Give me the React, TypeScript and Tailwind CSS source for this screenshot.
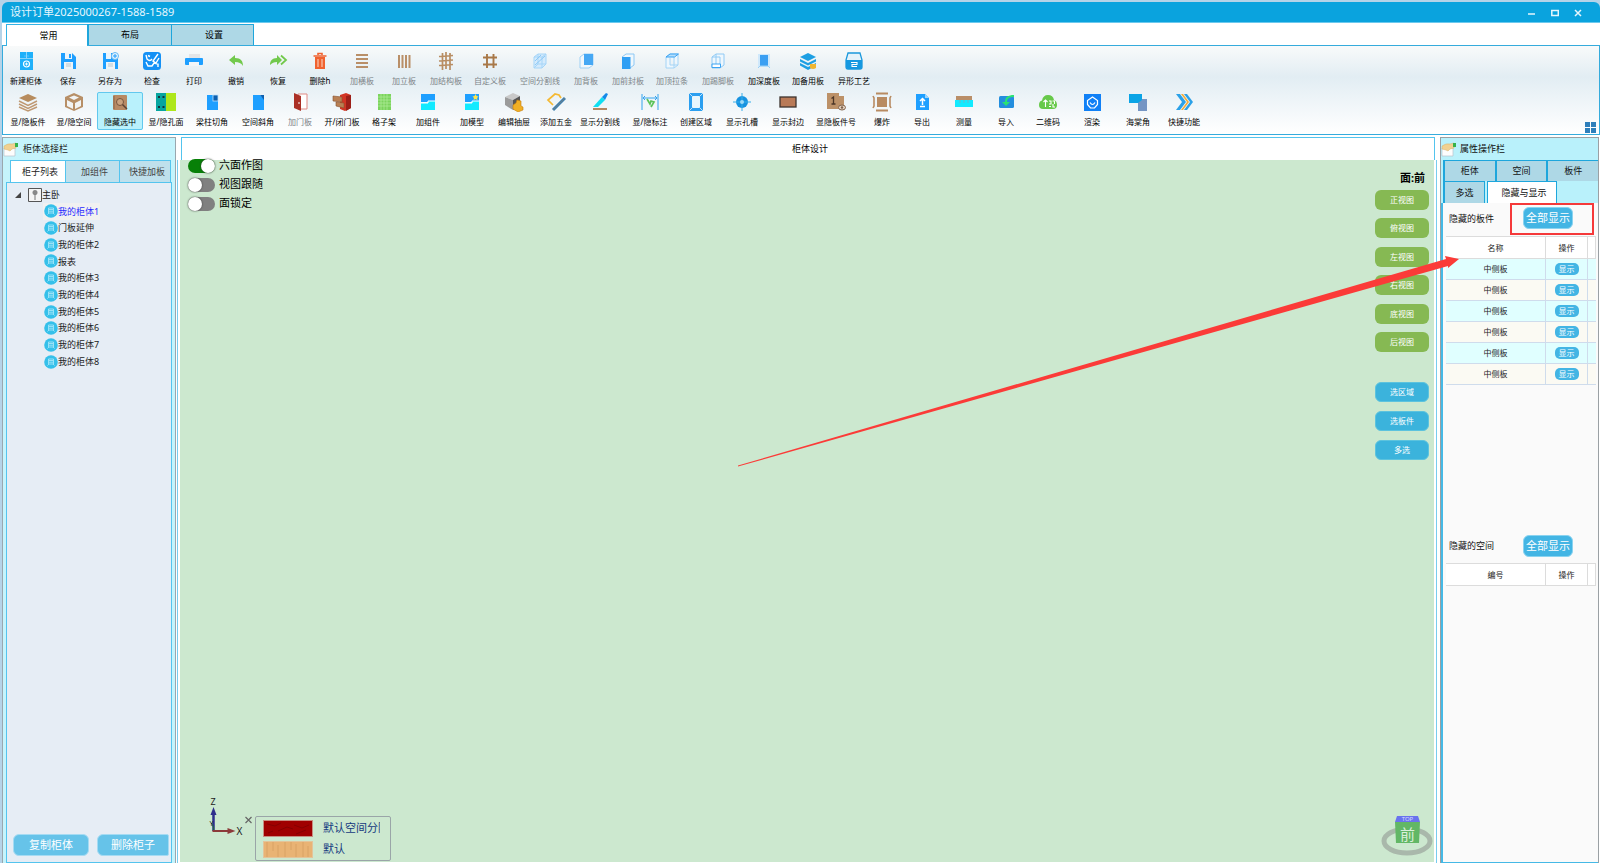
import type { ReactNode } from 'react';

const B = '#1e9fff';
const W = '#b98f68';

const icons: Record<string, ReactNode> = {
  newCabinet: (
    <>
      <rect x="4" y="1" width="13" height="6" fill="#1eb0fa" />
      <rect x="4" y="7.500" width="13" height="11.500" fill="#1eb0fa" />
      <path d="M10.500 1v6M8.500 5h1M11.500 5h1" stroke="#a8e0ff" strokeWidth=".8" />
      <circle cx="10.500" cy="13" r="3" fill="none" stroke="#fff" strokeWidth="1.200" />
      <path d="M9 13h3M10.500 11.500v3" stroke="#fff" strokeWidth=".9" />
    </>
  ),
  save: (
    <>
      <path d="M3 2h11l4 4v12H3z" fill={B} />
      <rect x="7" y="2" width="7" height="6" fill="#eaf4fb" />
      <rect x="11" y="3" width="2" height="4" fill={B} />
      <rect x="6" y="11" width="9" height="7" fill="#eef4f7" />
      <path d="M8 13h5M8 15h5" stroke="#b9c6ce" />
    </>
  ),
  saveAs: (
    <>
      <path d="M3 2h11l4 4v12H3z" fill={B} />
      <rect x="6" y="2" width="5" height="6" fill="#eaf4fb" />
      <rect x="6" y="11" width="9" height="7" fill="#eef4f7" />
      <path d="M8 13h5M8 15h5" stroke="#b9c6ce" />
      <circle cx="15" cy="5" r="3.500" fill="#e8f4fc" stroke="#62b9f5" />
      <path d="M13 5h4M15 3v4" stroke={B} />
    </>
  ),
  check: (
    <>
      <rect x="1" y="1" width="18" height="18" rx="3.500" fill="#1591f5" />
      <path d="M4 4l1 4q3 3 5 0M6 4.500l2 1M16 3l-5 7 3 2 3-5M4 11l2 4h4l2-3 4 1v3" fill="none" stroke="#fff" strokeWidth="1.400" />
    </>
  ),
  print: (
    <>
      <rect x="5" y="3" width="11" height="4" fill="#e3e5e7" />
      <rect x="1" y="7" width="18" height="7" rx="1" fill={B} />
      <rect x="5" y="11" width="10" height="4" fill="#f3f6f8" />
    </>
  ),
  undo: <path d="M3 9l6-5v3c6 0 8 3 8 8-2-3-4-4-8-4v3z" fill="#72c94c" />,
  redo: (
    <>
      <path d="M14 9L9 4v3c-5 0-7 3-7 7 2-2 4-3 7-3v3z" fill="#72c94c" />
      <path d="M13 4.500L18 9l-5 4.500" fill="none" stroke="#72c94c" strokeWidth="1.800" />
    </>
  ),
  trash: (
    <>
      <path d="M5 6h10v12H5z" fill="#f0622f" />
      <path d="M3.500 5h13M8 4V2.500h4V4" fill="none" stroke="#f0622f" strokeWidth="1.600" />
      <path d="M8 8v8M12 8v8" stroke="#f9c5b0" strokeWidth="1.200" />
    </>
  ),
  hBoards: <path d="M4 4h12M4 8h12M4 12h12M4 16h12" stroke={W} strokeWidth="2" />,
  vBoards: <path d="M5 4v13M8.500 4v13M12 4v13M15.500 4v13" stroke={W} strokeWidth="2" />,
  structure: (
    <path d="M6.500 2v17M10 1v17M14 2v17M3 5.500l14-1M3 10l14-1M3 14.500l14-1" stroke="#b88d63" strokeWidth="1.700" />
  ),
  custom: <path d="M7 3v14M13.500 3v14M3 6.500h14M3 13.500h14" stroke="#a87848" strokeWidth="1.900" />,
  split: (
    <>
      <path d="M4 6l4-3h8v10l-4 4H4zM4 6h8v11M12 6l4-3M8 3v10l-4 4M8 13h8" fill="#d3eafc" stroke="#a5d5f8" />
      <path d="M5 14l10-9M5 10l6-6" stroke="#8bc8f6" />
    </>
  ),
  back: (
    <>
      <path d="M4 6l4-3h9v11l-4 3H4z" fill="#f2f8fc" stroke="#9ed0f5" />
      <path d="M8 3h9v11H8z" fill="#46a8f4" />
    </>
  ),
  front: (
    <>
      <path d="M4 6l4-3h8v11l-4 3" fill="#eff7fc" stroke="#8dc8f5" />
      <path d="M4 6h8.500v12H4z" fill="#2f9ff4" />
    </>
  ),
  topBar: (
    <>
      <path d="M4 6l4-3h8v11l-4 3H4zM12 6v11M8 7v7h8" fill="#eef7fd" stroke="#a4d4f6" />
      <path d="M4 6h8.500l4-3H8z" fill="#b6dffb" stroke="#39a2f3" />
    </>
  ),
  kick: (
    <>
      <path d="M4 6l4-3h8v11l-4 3H4zM4 6h8v11M8 3v11" fill="#eef7fd" stroke="#90caf5" />
      <path d="M4 13h8.500v3.500H4z" fill="#fff" stroke="#3ba4f3" />
    </>
  ),
  depth: (
    <>
      <path d="M4 3h12v13H4z" fill="#cfe8fb" />
      <path d="M6 4h8v11H6z" fill="#3a9ff2" />
      <path d="M4 17l2-2h8l2 2" fill="none" stroke="#9bcff5" />
    </>
  ),
  spare: (
    <>
      <path d="M2 6l8-4 8 4-8 4zM2 8l8 4 8-4v2.500l-8 4-8-4zM2 12l8 4 8-4v2.500L10 19l-8-4.500z" fill="#1d9fe3" />
      <path d="M12 13h6v4q-3 2-6 0z" fill="#efb632" />
    </>
  ),
  shape: (
    <>
      <path d="M4 2h12l2 7v7q0 2-2 2H4q-2 0-2-2V9z" fill="#e4f2fa" stroke="#1a98dc" strokeWidth="1.300" />
      <path d="M2 9h16v7q0 2-2 2H4q-2 0-2-2z" fill="#1598e0" />
      <path d="M7 11.500h6v2H8v2h5" fill="none" stroke="#fff" strokeWidth="1.100" />
    </>
  ),
  boards: (
    <>
      <path d="M1 6l9-4 9 4-9 4z" fill="#b78c5e" />
      <path d="M1 9l9 4.500L19 9M1 12l9 4.500L19 12M1 15l9 4L19 15" fill="none" stroke="#bf9973" strokeWidth="1.400" />
    </>
  ),
  space: (
    <>
      <path d="M1 5l9-4 9 4v10l-9 4-9-4z" fill="#b78f67" />
      <path d="M3 8l6 3v6l-6-3zM17 8l-6 3v6l6-3zM5 5.500L10 3.500l5 2-5 2.500z" fill="#f2f4f4" />
    </>
  ),
  hideSel: (
    <>
      <rect x="3" y="3" width="14" height="15" rx="1" fill="#b78a63" />
      <path d="M4 4v13" stroke="#8e6748" />
      <circle cx="10" cy="10" r="3.500" fill="#caa27d" stroke="#77553c" />
      <path d="M12.500 12.500L17 17" stroke="#5c4334" strokeWidth="1.500" />
    </>
  ),
  holes: (
    <>
      <path d="M0 1h10v18H0z" fill="#08a5a0" />
      <path d="M10 1h10v18H10z" fill="#aee71b" />
      <path d="M2 5h2M6.500 5h2M2 15h2M6.500 15h2" stroke="#14343c" strokeWidth="1.800" />
    </>
  ),
  beam: (
    <>
      <rect x="5" y="3" width="11" height="15" fill={B} />
      <rect x="11" y="3" width="5" height="6" fill="#0c60b0" stroke="#bfe0fa" strokeWidth=".8" />
    </>
  ),
  bevel: (
    <>
      <path d="M5 3h7l4 4v11H5z" fill={B} />
      <path d="M12 3h4v5z" fill="#0c60b0" />
    </>
  ),
  door: (
    <>
      <path d="M8 2h9v15H8z" fill="#fff" stroke="#e08b84" />
      <path d="M4 1l7 3v15l-7-3z" fill="#ab3026" />
      <path d="M9 10v2" stroke="#fff" />
    </>
  ),
  openDoor: (
    <>
      <path d="M8 3l6-2 5 2v13l-6 3-5-2z" fill="#d23524" />
      <path d="M14 4l5-1v13l-5 3z" fill="#9c1f18" />
      <path d="M1 4l9 1v5l-9-1zM4 10l8 1v5l-8-2z" fill="#b98054" stroke="#86512e" strokeWidth=".6" />
    </>
  ),
  lattice: (
    <>
      <rect x="4" y="2" width="13" height="16" fill="#7bd45d" />
      <path d="M4 5h13M4 8h13M4 11h13M4 14h13M7 2v16M10 2v16M13 2v16" stroke="#b2ec9c" strokeWidth=".7" />
    </>
  ),
  component: (
    <>
      <path d="M3 2h14v8H3z" fill={B} />
      <path d="M3 11h7v-2h7v9H3z" fill="#12eaff" />
      <path d="M3 11h7V9h7" fill="none" stroke="#fff" />
    </>
  ),
  model: (
    <>
      <path d="M3 2h14v8H3z" fill={B} />
      <path d="M3 11h7v-2h7v9H3z" fill="#12eaff" />
      <path d="M3 11h7V9h7" fill="none" stroke="#fff" />
      <path d="M13.500 2l1 2 2 .5-1.500 1.500.5 2-2-1-2 1 .5-2L10.500 4.500l2-.5z" fill="#ffe44a" />
    </>
  ),
  drawer: (
    <>
      <path d="M1 5l8-4 7 3-7 4z" fill="#c9c9c9" />
      <path d="M1 5l8 3v10l-8-5z" fill="#9b9b9b" />
      <path d="M9 8l7-4v9l-7 5z" fill="#555" />
      <path d="M9 13l3-2 1-3 4 1v5l2 1v3l-5 2-5-3z" fill="#f0af25" stroke="#c77d0b" strokeWidth=".6" />
    </>
  ),
  hardware: (
    <>
      <path d="M7 13l-5-5 7-6 4 1 2 3" fill="none" stroke="#f5b932" strokeWidth="1.700" />
      <path d="M7 18L19 6" stroke="#3d7fae" strokeWidth="3" />
      <path d="M7 18L19 6" stroke="#6e7f8a" strokeWidth="1" />
    </>
  ),
  divider: (
    <>
      <path d="M3 15L12 5l3 3-7 7z" fill="#11dff2" />
      <path d="M12 5l4-4 2 1-3 6z" fill="#1589e8" />
      <path d="M3 17h14" stroke="#b48862" strokeWidth="2" />
    </>
  ),
  dimension: (
    <>
      <path d="M2 2v16M18 2v16M3 6h14M5 4L3 6l2 2M15 4l2 2-2 2" fill="none" stroke="#35a3ee" />
      <path d="M7 7l3 5 1-3 3 1-3 5" fill="none" stroke="#5cc35a" strokeWidth="1.700" />
    </>
  ),
  region: (
    <>
      <path d="M3 1h14v18H3z" fill="#2b9ff0" />
      <path d="M6 4h8v12H6z" fill="#e7f6fd" />
      <path d="M3 1l4 4M17 1l-4 4M3 19l4-4M17 19l-4-4" stroke="#bfe2fa" />
    </>
  ),
  slot: (
    <>
      <circle cx="10" cy="10" r="6" fill="#1692e0" />
      <path d="M10 1v18M1 10h18" stroke="#36aeea" />
      <circle cx="10" cy="10" r="2" fill="#9bd9f7" />
    </>
  ),
  edge: <rect x="2" y="5" width="16" height="10" fill="#b97a57" stroke="#3c332e" strokeWidth="1.300" />,
  number: (
    <>
      <path d="M1 1h12v3h5v13H1z" fill="#bc9168" />
      <path d="M5.500 6.500L7.500 5v7M5.500 12h4" fill="none" stroke="#4b3526" strokeWidth="1.300" />
      <ellipse cx="16" cy="15.500" rx="3.500" ry="2.500" fill="#e5d5c5" stroke="#80624a" />
      <circle cx="16" cy="15.500" r="1.200" fill="#80624a" />
    </>
  ),
  explode: (
    <>
      <rect x="5" y="5" width="10" height="10" fill="#b88b62" />
      <path d="M4 1.500h12M4 18.500h12" stroke="#b88b62" strokeWidth="2" />
      <path d="M1 4l1 2v8l-1 2M19 4l-1 2v8l1 2" fill="none" stroke="#b88b62" strokeWidth="1.600" />
    </>
  ),
  exportFile: (
    <>
      <path d="M4 2h9l4 4v12H4z" fill={B} />
      <path d="M13 2v4h4z" fill="#9cd4fb" />
      <path d="M10.500 13V7M8 9l2.500-2.500L13 9M8 14.500h5" fill="none" stroke="#fff" strokeWidth="1.500" />
    </>
  ),
  measure: (
    <>
      <rect x="2" y="4" width="16" height="5" fill="#b98e68" />
      <rect x="1" y="8" width="18" height="7" fill="#12eaff" />
      <path d="M6 8v3M10 8v3M14 8v3" stroke="#6bb7c9" />
    </>
  ),
  importFile: (
    <>
      <rect x="3" y="4" width="15" height="12" rx="1.500" fill="#238ede" />
      <path d="M18 3c-6 0-9 2-9 7H6l4 4 4-4h-3c0-4 3-5 7-5z" fill="#2be273" />
    </>
  ),
  qr: (
    <>
      <path d="M5 17q-4 0-4-4t3-4.500Q5 3 10 3t6 5q3 1 3 5t-4 4z" fill="#67c94a" />
      <path d="M7.500 15V8M5.500 10l2-2 2 2M11 9h2v3h-2M14.500 9h2v3M11 14.500h2M15 12v3h2" fill="none" stroke="#fff" strokeWidth="1.100" />
    </>
  ),
  render: (
    <>
      <rect x="2" y="2" width="17" height="17" fill="#1080f6" />
      <path d="M10.500 5l5 3.500v4l-3 3.500h-4l-3-3.500v-4z" fill="none" stroke="#fff" strokeWidth="1.200" />
      <path d="M8 10.500q2.500 4 5 0" fill="none" stroke="#fff" strokeWidth="1.200" />
    </>
  ),
  begonia: (
    <>
      <path d="M10 7h9v12h-9z" fill="#7495c4" />
      <path d="M1 2h13v6l-4 3H1z" fill="#0ba4e6" />
    </>
  ),
  quick: (
    <>
      <path d="M2 2h4l6 8-6 8H2l6-8z" fill="#2ba1e8" />
      <path d="M7 2h2l6 8-6 8H7l6-8z" fill="#f4ab37" />
      <path d="M10 2h3l6 8-6 8h-3l6-8z" fill="#2ba1e8" />
    </>
  ),
};

type Tool = { icon: string; label: string; w: string; dim?: boolean; on?: boolean };

const W38 = 'w-[38px]';
const W42 = 'w-[42px]';
const W46 = 'w-[46px]';
const W50 = 'w-[50px]';
const W54 = 'w-[54px]';

const rowOne: Tool[] = [
  { icon: 'newCabinet', label: '新建柜体', w: W42 },
  { icon: 'save', label: '保存', w: W42 },
  { icon: 'saveAs', label: '另存为', w: W42 },
  { icon: 'check', label: '检查', w: W42 },
  { icon: 'print', label: '打印', w: W42 },
  { icon: 'undo', label: '撤销', w: W42 },
  { icon: 'redo', label: '恢复', w: W42 },
  { icon: 'trash', label: '删除h', w: W42 },
  { icon: 'hBoards', label: '加横板', w: W42, dim: true },
  { icon: 'vBoards', label: '加立板', w: W42, dim: true },
  { icon: 'structure', label: '加结构板', w: W42, dim: true },
  { icon: 'custom', label: '自定义板', w: W46, dim: true },
  { icon: 'split', label: '空间分割线', w: W54, dim: true },
  { icon: 'back', label: '加背板', w: W38, dim: true },
  { icon: 'front', label: '加前封板', w: W46, dim: true },
  { icon: 'topBar', label: '加顶拉条', w: W42, dim: true },
  { icon: 'kick', label: '加踢脚板', w: W50, dim: true },
  { icon: 'depth', label: '加深度板', w: W42 },
  { icon: 'spare', label: '加备用板', w: W46 },
  { icon: 'shape', label: '异形工艺', w: W46 },
];

const rowTwo: Tool[] = [
  { icon: 'boards', label: '显/隐板件', w: W46 },
  { icon: 'space', label: '显/隐空间', w: W46 },
  { icon: 'hideSel', label: '隐藏选中', w: W46, on: true },
  { icon: 'holes', label: '显/隐孔面', w: W46 },
  { icon: 'beam', label: '梁柱切角', w: W46 },
  { icon: 'bevel', label: '空间斜角', w: W46 },
  { icon: 'door', label: '加门板', w: W38, dim: true },
  { icon: 'openDoor', label: '开/闭门板', w: W46 },
  { icon: 'lattice', label: '格子架', w: W38 },
  { icon: 'component', label: '加组件', w: W50 },
  { icon: 'model', label: '加模型', w: W38 },
  { icon: 'drawer', label: '编辑抽屉', w: W46 },
  { icon: 'hardware', label: '添加五金', w: W38 },
  { icon: 'divider', label: '显示分割线', w: W50 },
  { icon: 'dimension', label: '显/隐标注', w: W50 },
  { icon: 'region', label: '创建区域', w: W42 },
  { icon: 'slot', label: '显示孔槽', w: W50 },
  { icon: 'edge', label: '显示封边', w: W42 },
  { icon: 'number', label: '显隐板件号', w: W54 },
  { icon: 'explode', label: '爆炸', w: W38 },
  { icon: 'exportFile', label: '导出', w: W42 },
  { icon: 'measure', label: '测量', w: W42 },
  { icon: 'importFile', label: '导入', w: W42 },
  { icon: 'qr', label: '二维码', w: W42 },
  { icon: 'render', label: '渲染', w: W46 },
  { icon: 'begonia', label: '海棠角', w: W46 },
  { icon: 'quick', label: '快捷功能', w: W46 },
];

function ToolButton({ tool }: { tool: Tool }) {
  return (
    <button
      type="button"
      className={`${tool.w} flex h-[38px] shrink-0 flex-col items-center whitespace-nowrap text-[8px] leading-5 ${
        tool.dim ? 'text-[#7d8488]' : 'text-black'
      } ${tool.on ? 'rounded-xs bg-[#b9f1fc] outline outline-[#62c8ee] -outline-offset-1' : ''}`}
    >
      <svg viewBox="0 0 20 20" className="size-5 shrink-0" aria-hidden="true">
        {icons[tool.icon]}
      </svg>
      {tool.label}
    </button>
  );
}

function HandIcon() {
  return (
    <svg viewBox="0 0 16 15" className="h-[15px] w-4 shrink-0" aria-hidden="true">
      <path d="M1 6h11v8H1z" fill="#fdfdfd" stroke="#b9c2cc" strokeWidth=".7" />
      <path d="M1 4q4-3 8-2l4-1v5l-4 1-2 2-2-1-4-1z" fill="#f1d190" stroke="#d6b06a" strokeWidth=".5" />
      <path d="M12 1h3v4h-3z" fill="#35b34a" />
    </svg>
  );
}

const cabinets = ['我的柜体1', '门板延伸', '我的柜体2', '报表', '我的柜体3', '我的柜体4', '我的柜体5', '我的柜体6', '我的柜体7', '我的柜体8'];

function LeftPanel() {
  return (
    <aside className="flex w-[174px] shrink-0 flex-col border-x border-t border-[#9aa7ae] bg-[#c5f4fc] text-[9px] text-[#222]">
      <header className="flex h-[22px] shrink-0 items-center gap-1">
        <HandIcon />
        <h2>柜体选择栏</h2>
      </header>
      <div className="mr-1 ml-[7px] flex h-[22px] shrink-0">
        <button type="button" className="w-14 border border-b-0 border-[#54c4ee] bg-white pl-1">柜子列表</button>
        <button type="button" className="w-[54px] border-t border-r border-[#54c4ee] bg-[#bfe0ec] pl-1 text-[#444]">加组件</button>
        <button type="button" className="flex-1 border-t border-r border-[#54c4ee] bg-[#bfe0ec] pl-1 text-[#444]">快捷加板</button>
      </div>
      <div className="mx-[3px] flex min-h-0 flex-1 flex-col justify-between border border-[#54c4ee] bg-[#e6edf5]">
        <div>
          <div className="flex h-5 items-center pt-[3px] pl-2">
            <svg viewBox="0 0 6 6" className="mr-[7px] size-[6px]" aria-hidden="true">
              <path d="M6 0v6H0z" fill="#444" />
            </svg>
            <svg viewBox="0 0 14 14" className="size-[14px]" aria-hidden="true">
              <path d="M.5.5h13v13H.5z" fill="#f4f4f4" stroke="#555" />
              <circle cx="7" cy="4.500" r="2.500" fill="#888" />
              <path d="M7 6v6" stroke="#777" />
            </svg>
            主卧
          </div>
          <ul className="grid h-[167px] grid-rows-10 pl-9">
            {cabinets.map((name, i) => (
              <li key={name} className="flex">
                <button type="button" className={`flex items-center px-px ${i === 0 ? 'bg-[#f1f1f1] text-[#2a2aff]' : ''}`}>
                  <svg viewBox="0 0 14 14" className="size-[14px]" aria-hidden="true">
                    <circle cx="7" cy="7" r="6.800" fill="#35c0ea" />
                    <path d="M4.500 9V4h5v5M3.500 10.500l1.500-1.500h4l1.500 1.500M5 5.500h4M5 7.200h4" fill="none" stroke="#a4e5f8" strokeWidth=".9" />
                  </svg>
                  {name}
                </button>
              </li>
            ))}
          </ul>
        </div>
        <div className="mr-[2px] mb-[6px] ml-[6px] flex gap-2 text-[11px] text-white">
          <button type="button" className="h-[22px] w-[76px] rounded-md border border-[#a5dbf3] bg-[#66c3e9]">复制柜体</button>
          <button type="button" className="h-[22px] flex-1 rounded-l-md rounded-r-xs border border-[#a5dbf3] bg-[#66c3e9]">删除柜子</button>
        </div>
      </div>
    </aside>
  );
}

function Toggle({ label, checked }: { label: string; checked?: boolean }) {
  return (
    <label className="flex h-[19px] items-center gap-1 text-[11px] text-black">
      <input type="checkbox" defaultChecked={checked} className="peer sr-only" />
      <span className="flex h-[14px] w-[27px] rounded-full bg-[#808080] peer-checked:justify-end peer-checked:bg-[#078007]">
        <span className="size-[14px] rounded-full bg-white shadow-[0_0_2px_#333]" />
      </span>
      {label}
    </label>
  );
}

function Workspace() {
  return (
    <main className="flex min-w-0 flex-1 flex-col">
      <h1 className="mr-[2px] ml-1 flex h-[23px] shrink-0 items-center justify-center border border-b-0 border-[#54c4ee] bg-white pl-1 text-[9px] text-black">
        柜体设计
      </h1>
      <div className="flex min-h-0 flex-1 border-x border-[#78ccef] px-[2px] pb-px">
        <div className="flex flex-1 justify-between bg-[#cce8cf]">
          <div className="flex flex-col justify-between">
            <div className="-mt-1 pl-2">
              <Toggle label="六面作图" checked />
              <Toggle label="视图跟随" />
              <Toggle label="面锁定" />
            </div>
            <div className="flex items-end pb-px pl-6">
              <svg viewBox="0 0 50 66" className="h-[66px] w-[51px]" aria-hidden="true">
                <path d="M9 36V18" stroke="#2e2e8c" strokeWidth="2.500" />
                <path d="M9 12l3 8H6z" fill="#2e2e8c" />
                <path d="M8 36h16" stroke="#8c3a3a" strokeWidth="2" />
                <path d="M31 36l-8 3v-6z" fill="#8c3a3a" />
                <path d="M7 28l2 4v3" fill="none" stroke="#1d6a3a" />
                <text x="6" y="10" fontSize="9" fontFamily="Noto Sans" fill="#222">Z</text>
                <text x="5" y="31" fontSize="7" fontFamily="Noto Sans" fill="#222">Y</text>
                <text x="32" y="40" fontSize="10" fontFamily="Noto Sans" fill="#222">X</text>
                <path d="M41 22l6 6M47 22l-6 6" stroke="#666" strokeWidth="1.200" />
              </svg>
              <dl className="grid h-[45px] w-[136px] grid-cols-[50px_1fr] gap-x-[10px] gap-y-1 overflow-hidden rounded-xs border border-[#9aa5a8] py-[3px] pr-[10px] pl-[7px] text-[11px] leading-4 text-[#153a80]">
                <dt className="border border-[#c78e82] bg-[#a00000]">
                  <svg viewBox="0 0 48 15" className="size-full" preserveAspectRatio="none" aria-hidden="true">
                    <path d="M3 3l8 2 6-3M14 10l9-4 6 2M30 4l8 3 7-3M32 13l10-4M4 12l5-2" fill="none" stroke="#7a0000" strokeWidth=".7" />
                  </svg>
                </dt>
                <dd className="overflow-hidden whitespace-nowrap">默认空间分隔</dd>
                <dt className="border border-[#e3c49a] bg-[#e9b374]">
                  <svg viewBox="0 0 48 15" className="size-full" preserveAspectRatio="none" aria-hidden="true">
                    <path d="M3 0v15M9 0v9M14 3v12M21 0v15M27 0v8M32 2v13M39 0v15M44 4v11" stroke="#d9a264" strokeWidth="1" />
                  </svg>
                </dt>
                <dd>默认</dd>
              </dl>
            </div>
          </div>
          <div className="flex flex-col items-end justify-between text-[8px] text-white">
            <div className="flex w-[59px] flex-col pt-[10px] pr-[5px]">
              <p className="mb-1 pr-1 text-right text-[11px] leading-4 font-bold text-black">面:前</p>
              <div className="flex h-[162px] flex-col justify-between">
                {['正视图', '俯视图', '左视图', '右视图', '底视图', '后视图'].map((t) => (
                  <button key={t} type="button" className="h-5 rounded-md bg-[#86b953]">{t}</button>
                ))}
              </div>
              <div className="mt-[30px] flex flex-col gap-[9px]">
                {['选区域', '选板件', '多选'].map((t) => (
                  <button key={t} type="button" className="h-5 rounded-md border border-[#5cc3de] bg-[#3bb3dc]">{t}</button>
                ))}
              </div>
            </div>
            <svg viewBox="0 0 54 42" className="mb-[6px] h-[42px] w-[54px]" role="img" aria-label="前">
              <ellipse cx="27" cy="27" rx="23" ry="12" fill="none" stroke="#a9b8ab" strokeWidth="5" />
              <path d="M17 2h21l2 6H15z" fill="#6a73ee" />
              <path d="M15 8h25l-1 21H16z" fill="#62b766" />
              <text x="27.500" y="7" textAnchor="middle" fontSize="6" fill="#d6d9ff" fontFamily="Noto Sans">TOP</text>
              <text x="27.500" y="26" textAnchor="middle" fontSize="15" fill="#d9efda" fontFamily="Noto Sans CJK SC">前</text>
            </svg>
          </div>
        </div>
      </div>
    </main>
  );
}

function HiddenTable({ title, rows }: { title: string; rows: string[] }) {
  return (
    <table className="w-full table-fixed border-collapse text-[8px] text-[#222]">
      <colgroup>
        <col />
        <col className="w-[42px]" />
        <col className="w-2" />
      </colgroup>
      <thead>
        <tr className="h-[22px] border-y border-[#dcdcdc] bg-white">
          <th className="border-r border-[#dcdcdc] p-0 font-normal">{title}</th>
          <th className="border-r border-[#dcdcdc] p-0 font-normal">操作</th>
          <th className="border-r border-[#dcdcdc] p-0" />
        </tr>
      </thead>
      <tbody>
        {rows.map((r, i) => (
          <tr key={i} className={`h-[21px] border-b border-[#cfdcec] ${i % 2 ? 'bg-[#fbfaf3]' : 'bg-[#e0ffff]'}`}>
            <td className="border-r border-[#cfdcec] p-0 text-center">{r}</td>
            <td className="border-r border-[#cfdcec] p-0">
              <button type="button" className="mx-auto block h-3 w-6 rounded-[5px] bg-[#43b5e4] leading-3 text-white">显示</button>
            </td>
            <td className="p-0" />
          </tr>
        ))}
      </tbody>
    </table>
  );
}

function ShowAll() {
  return (
    <button type="button" className="h-[22px] w-[50px] rounded-md border border-[#8ad3f0] bg-[#43b5e4] text-[11px] text-white">
      全部显示
    </button>
  );
}

function RightPanel() {
  const tab = 'bg-[#aed8e6] border-t border-l-2 border-[#1ea6dc]';
  return (
    <aside className="mr-px ml-[2px] flex w-[159px] shrink-0 flex-col border-x border-t border-[#9aa0a4] bg-[#b9f1fb] text-[9px] text-[#111]">
      <header className="flex h-[22px] shrink-0 items-center gap-[3px]">
        <HandIcon />
        <h2>属性操作栏</h2>
      </header>
      <div className="grid h-[21px] shrink-0 grid-cols-3 pl-[2px]">
        <button type="button" className={tab}>柜体</button>
        <button type="button" className={tab}>空间</button>
        <button type="button" className={tab}>板件</button>
      </div>
      <div className="flex h-[22px] shrink-0 pl-[2px]">
        <button type="button" className={`${tab} w-[42px] border-r`}>多选</button>
        <button type="button" className="ml-[2px] w-[70px] border border-b-0 border-[#1ea6dc] bg-white pl-1">隐藏与显示</button>
      </div>
      <div className="flex min-h-0 flex-1 flex-col border-b border-l-2 border-[#45b9e6] bg-[#fafafa] pr-[2px] pl-[3px]">
        <section className="h-[327px]">
          <div className="mb-px flex h-8 items-center justify-between pr-[2px] pl-[3px]">
            <h3>隐藏的板件</h3>
            <div className="flex h-8 w-[84px] justify-center border-2 border-[#f5393a] pt-[2px] pr-2">
              <ShowAll />
            </div>
          </div>
          <HiddenTable title="名称" rows={Array(6).fill('中侧板')} />
        </section>
        <section>
          <div className="mb-px flex h-8 items-center justify-between pr-[23px] pl-[3px]">
            <h3>隐藏的空间</h3>
            <ShowAll />
          </div>
          <HiddenTable title="编号" rows={[]} />
        </section>
      </div>
    </aside>
  );
}

export default function App() {
  return (
    <div className="relative flex h-screen flex-col overflow-hidden bg-[#b5d3e8] pt-[2px] font-['Noto_Sans','Noto_Sans_CJK_SC',sans-serif]">
      <header className="ml-[2px] flex h-[21px] shrink-0 items-center justify-between rounded-t-md border-b border-[#6cc9ee] bg-[#0aa3de] pt-px pr-[18px] pl-2 text-[11px] text-[#e6f6fd]">
        <span>设计订单2025000267-1588-1589</span>
        <div className="flex gap-[15px]">
          <button type="button" aria-label="最小化">
            <svg viewBox="0 0 8 8" className="size-2"><path d="M0 5h7" stroke="#e6f6fd" strokeWidth="1.500" /></svg>
          </button>
          <button type="button" aria-label="最大化">
            <svg viewBox="0 0 8 8" className="size-2"><path d="M.8 1.500h6.500v5H.8z" fill="none" stroke="#e6f6fd" strokeWidth="1.500" /></svg>
          </button>
          <button type="button" aria-label="关闭">
            <svg viewBox="0 0 8 8" className="size-2"><path d="M1 1l6 6M7 1L1 7" stroke="#e6f6fd" strokeWidth="1.500" /></svg>
          </button>
        </div>
      </header>
      <nav className="ml-[2px] flex h-[22px] shrink-0 bg-white pt-px pl-1 text-[9px] text-black">
        <button type="button" className="z-10 -mb-px w-[81px] border-t border-l border-[#35b2e4] bg-white pl-[3px]">常用</button>
        <button type="button" className="w-[84px] border-t border-l-2 border-[#1ea6dc] bg-[#aed8e6]">布局</button>
        <button type="button" className="w-[83px] border-x border-t border-[#1ea6dc] bg-[#aed8e6] pl-[3px]">设置</button>
      </nav>
      <div className="ml-[2px] flex h-[90px] shrink-0 items-end justify-between border border-[#35abdc] bg-linear-to-b from-[#f8fafa] via-[#e2edf3] via-35% to-white pr-[3px] pb-px">
        <div className="flex h-full flex-col gap-[3px] pt-[5px]">
          <div className="flex pl-[2px]">{rowOne.map((t) => <ToolButton key={t.label} tool={t} />)}</div>
          <div className="flex pl-[2px]">{rowTwo.map((t) => <ToolButton key={t.label} tool={t} />)}</div>
        </div>
        <button type="button" aria-label="切换视图">
          <svg viewBox="0 0 11 11" className="size-[11px]">
            <path d="M0 0h5v5H0zM6 0h5v5H6zM0 6h5v5H0zM6 6h5v5H6z" fill="#2e7fbb" />
          </svg>
        </button>
      </div>
      <div className="ml-[2px] flex min-h-0 flex-1 gap-px bg-white pt-[2px]">
        <LeftPanel />
        <Workspace />
        <RightPanel />
      </div>
      <svg viewBox="0 0 730 220" className="pointer-events-none absolute top-[250px] right-[135px] h-[220px] w-[730px]" aria-hidden="true">
        <path d="M3 215.500L711 9l-1-3 14 3-11 9v-2L3 216.500z" fill="#fb3b38" />
      </svg>
    </div>
  );
}
